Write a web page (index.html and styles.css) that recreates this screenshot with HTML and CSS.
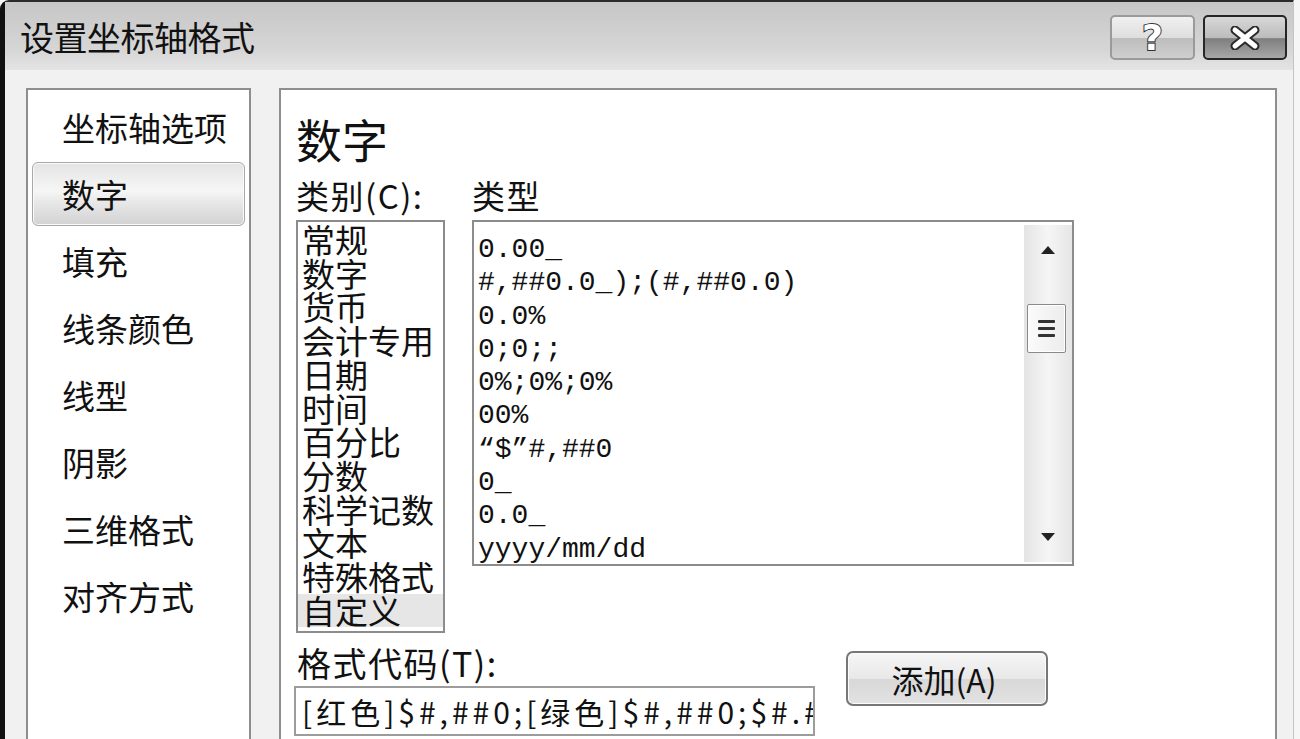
FILE: index.html
```html
<!DOCTYPE html>
<html lang="zh-CN">
  <head>
    <meta charset="UTF-8" />
    <meta name="viewport" content="width=device-width, initial-scale=1.0" />
    <title>设置坐标轴格式</title>
    <link rel="stylesheet" href="styles.css">
  </head>
  <body>
    <div class="dialog">
      <div class="titlebar">
        <span class="title">设置坐标轴格式</span>
        <div class="caption-btns">
          <button class="cap-btn help">?</button>
          <button class="cap-btn close">
            <svg width="34" height="24" viewBox="0 0 34 24">
              <path d="M7 4 L27 20 M27 4 L7 20" stroke="#2a2a2a" stroke-width="9" stroke-linecap="round" />
              <path d="M7 4 L27 20 M27 4 L7 20" stroke="#fff" stroke-width="5" stroke-linecap="round" />
            </svg>
          </button>
        </div>
      </div>
      <div class="content">
        <ul class="nav">
          <li>坐标轴选项</li>
          <li class="active">数字</li>
          <li>填充</li>
          <li>线条颜色</li>
          <li>线型</li>
          <li>阴影</li>
          <li>三维格式</li>
          <li>对齐方式</li>
        </ul>
        <section class="panel">
          <h2 class="panel-title">数字</h2>
          <div class="lists">
            <div class="col">
              <div class="field-label">类别(C):</div>
              <ul class="listbox cat-list">
                <li>常规</li>
                <li>数字</li>
                <li>货币</li>
                <li>会计专用</li>
                <li>日期</li>
                <li>时间</li>
                <li>百分比</li>
                <li>分数</li>
                <li>科学记数</li>
                <li>文本</li>
                <li>特殊格式</li>
                <li class="selected">自定义</li>
              </ul>
            </div>
            <div class="col">
              <div class="field-label">类型</div>
              <div class="listbox type-list">
                <ul class="type-items">
                  <li>0.00_</li>
                  <li>#,##0.0_);(#,##0.0)</li>
                  <li>0.0%</li>
                  <li>0;0;;</li>
                  <li>0%;0%;0%</li>
                  <li>00%</li>
                  <li>“$”#,##0</li>
                  <li>0_</li>
                  <li>0.0_</li>
                  <li>yyyy/mm/dd</li>
                </ul>
                <div class="scrollbar">
                  <div class="sb-arrow">
                    <svg width="14" height="8" viewBox="0 0 14 8"><path d="M7 0 L14 8 L0 8 Z" fill="#222" /></svg>
                  </div>
                  <div class="sb-track">
                    <div class="sb-thumb">
                      <span></span>
                      <span></span>
                      <span></span>
                    </div>
                  </div>
                  <div class="sb-arrow">
                    <svg width="14" height="8" viewBox="0 0 14 8"><path d="M0 0 L14 0 L7 8 Z" fill="#222" /></svg>
                  </div>
                </div>
              </div>
            </div>
          </div>
          <div class="code-row">
            <div class="code-field">
              <div class="field-label code-label">格式代码(T):</div>
              <div class="code-input">[红色]$#,##0;[绿色]$#,##0;$#.#</div>
            </div>
            <button class="add-btn">添加(A)</button>
          </div>
        </section>
      </div>
    </div>
  </body>
</html>
```

FILE: styles.css
```css
html,
body {
  margin: 0;
  height: 739px;
  overflow: hidden;
  background: #f6f6f6;
}
body {
  font-family: "Noto Sans CJK SC", "Noto Sans", sans-serif;
  color: #111;
}
ul {
  list-style: none;
  margin: 0;
  padding: 0;
}
.dialog {
  width: 1288px;
  height: 780px;
  border-top: 2px solid #2a2a2a;
  border-left: 5px solid #111;
  border-right: 1px solid #c4c4c4;
  border-top-left-radius: 9px;
  background: #f1f1f1;
  display: flex;
  flex-direction: column;
}
.titlebar {
  height: 68px;
  display: flex;
  justify-content: space-between;
  align-items: flex-start;
  padding: 0 6px 0 15px;
  background: linear-gradient(to bottom, #c6c6c6, #d6d6d6 70%, #e4e4e4);
}
.title {
  font-size: 34px;
  line-height: 70px;
  letter-spacing: -0.5px;
}
.caption-btns {
  display: flex;
  gap: 8px;
  padding-top: 13px;
}
.cap-btn {
  width: 85px;
  height: 45px;
  border-radius: 5px;
  padding: 0;
  display: flex;
  align-items: center;
  justify-content: center;
}
.help {
  border: 2px solid #9a9a9a;
  background: linear-gradient(to bottom, #f0f0f0, #dedede 50%, #bdbdbd 52%, #cfcfcf);
  font-family: "DejaVu Sans", sans-serif;
  font-weight: bold;
  font-size: 36px;
  line-height: 40px;
  color: #fff;
  -webkit-text-stroke: 2px #333;
  paint-order: stroke fill;
}
.close {
  width: 84px;
  border: 2px solid #262626;
  background: linear-gradient(to bottom, #d8d8d8, #bcbcbc 50%, #7e7e7e 53%, #a8a8a8);
}
.content {
  flex: 1;
  display: flex;
  gap: 28px;
  padding: 18px 16px 0 21px;
}
.nav {
  width: 221px;
  border: 2px solid #8e8e8e;
  background: #fff;
  padding-top: 5px;
}
.nav li {
  height: 62px;
  line-height: 62px;
  margin: 0 4px 3px;
  padding-left: 29px;
  font-size: 33px;
  border: 1px solid transparent;
  border-radius: 6px;
}
.nav li.active {
  border-color: #a8a8a8;
  background: linear-gradient(to bottom, #e4e4e4, #f6f6f6 45%, #eaeaea 60%, #d2d2d2);
  box-shadow: inset 0 0 0 1px #fafafa;
}
.panel {
  flex: 1;
  border: 2px solid #8e8e8e;
  background: #fff;
  padding: 20px 15px 0;
}
.panel-title {
  margin: 0;
  font-weight: normal;
  font-size: 46px;
  line-height: 56px;
}
.lists {
  display: flex;
  gap: 27px;
  align-items: flex-start;
  margin-top: 4px;
}
.field-label {
  font-size: 33px;
  line-height: 50px;
  letter-spacing: 1.5px;
}
.listbox {
  border: 2px solid #8c8c8c;
  background: #fff;
  overflow: hidden;
}
.cat-list {
  width: 145px;
  height: 408px;
  padding-top: 1px;
}
.cat-list li {
  font-size: 33px;
  line-height: 33.7px;
  padding-left: 4px;
  white-space: nowrap;
}
.cat-list li.selected {
  background: #e6e6e6;
}
.type-list {
  width: 598px;
  height: 342px;
  display: flex;
}
.type-items {
  flex: 1;
  padding: 11px 0 0 4px;
  font-family: "Liberation Mono", "Noto Sans CJK SC", monospace;
  font-size: 28px;
}
.type-items li {
  line-height: 33.3px;
  white-space: nowrap;
}
.scrollbar {
  width: 48px;
  margin: 3px 0 2px;
  display: flex;
  flex-direction: column;
  background: linear-gradient(to right, #e4e4e4, #f5f5f5 50%, #e6e6e6);
}
.sb-arrow {
  height: 50px;
  display: flex;
  align-items: center;
  justify-content: center;
}
.sb-track {
  flex: 1;
}
.sb-thumb {
  width: 37px;
  height: 47px;
  margin: 29px 0 0 3px;
  border: 1px solid #8a8a8a;
  border-radius: 2px;
  background: linear-gradient(to right, #fbfbfb, #ececec);
  box-shadow: inset 0 0 0 1px #fff;
  display: flex;
  flex-direction: column;
  align-items: center;
  justify-content: center;
  gap: 4px;
}
.sb-thumb span {
  display: block;
  width: 17px;
  height: 3px;
  background: #333;
  border-radius: 1px;
}
.code-row {
  display: flex;
  align-items: flex-start;
  gap: 31px;
}
.code-field {
  margin-left: -2px;
}
.code-label {
  font-size: 34px;
  line-height: 40px;
  margin: 10px 0 3px 3px;
}
.code-input {
  width: 511px;
  height: 46px;
  border: 2px solid #9c9c9c;
  padding-left: 6px;
  font-size: 30px;
  line-height: 46px;
  white-space: nowrap;
  overflow: hidden;
  letter-spacing: 4px;
}
.add-btn {
  margin-top: 18px;
  width: 202px;
  height: 55px;
  border: 2px solid #777;
  border-radius: 7px;
  background: linear-gradient(to bottom, #f6f6f6, #e8e8e8 50%, #d8d8d8 52%, #e2e2e2);
  box-shadow: inset 0 0 0 1px #fbfbfb;
  font-family: "Noto Sans CJK SC", sans-serif;
  font-size: 32px;
  color: #111;
  padding: 0 6px 0 0;
}
```
